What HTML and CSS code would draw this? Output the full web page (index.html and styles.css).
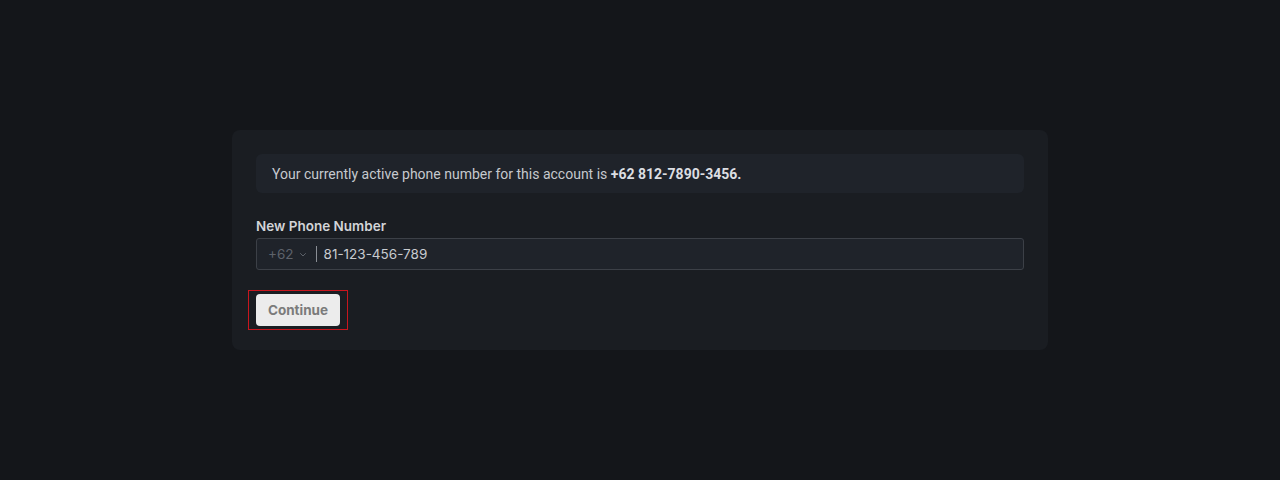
FILE: index.html
```html
<!DOCTYPE html>
<html>
<head>
<meta charset="utf-8">
<link rel="stylesheet" href="styles.css">
</head>
<body>
<main class="page">
  <section class="card">
    <div class="notice">Your currently active phone number for this account is <strong>+62 812-7890-3456.</strong></div>
    <div class="field">
      <label class="label" for="phone">New Phone Number</label>
      <div class="input">
        <span class="code">+62
          <svg class="chev" width="8" height="6" viewBox="0 0 8 6"><path d="M1.5 1.5 L4 4 L6.5 1.5" fill="none" stroke="currentColor" stroke-width="1" stroke-linecap="round" stroke-linejoin="round"/></svg>
        </span>
        <span class="sep"></span>
        <span class="value" id="phone">81-123-456-789</span>
      </div>
    </div>
    <div class="actions">
      <button class="btn">Continue</button>
    </div>
  </section>
</main>
</body>
</html>
```

FILE: styles.css
```css
* { box-sizing: border-box; }
html, body { margin: 0; padding: 0; }
body {
  background: #14161a;
  font-family: Roboto, "Liberation Sans", sans-serif;
  color: #c9ccd1;
}
.page {
  height: 480px;
  display: flex;
  align-items: center;
  justify-content: center;
}
.card {
  width: 816px;
  background: #1a1d22;
  border-radius: 8px;
  padding: 24px;
}
.notice {
  background: #1f232a;
  border-radius: 6px;
  padding: 10px 16px 9px;
  font-size: 14px;
  line-height: 20px;
  color: #c6c9ce;
}
.notice strong { color: #dcdee2; font-weight: 700; }
.field { margin-top: 23px; }
.label {
  display: block;
  font-family: Inter, "Liberation Sans", sans-serif;
  font-size: 13.5px;
  line-height: 20px;
  font-weight: 600;
  color: #d2d4d8;
  margin-bottom: 2px;
}
.input {
  height: 32px;
  border: 1px solid #3c4047;
  border-radius: 3px;
  background: #1f232a;
  display: flex;
  align-items: center;
  padding: 0 11px;
  font-family: Inter, "Liberation Sans", sans-serif;
  font-size: 13.5px;
}
.code {
  color: #5d626a;
  display: flex;
  align-items: center;
  gap: 5px;
}
.chev { color: #5d626a; margin-top: 1px; }
.sep {
  width: 1px;
  height: 16px;
  background: #8a8e95;
  margin: 0 7px 0 9px;
}
.value { color: #c8cbd0; }
.actions { margin-top: 24px; display: flex; }
.btn {
  position: relative;
  display: block;
  width: 84px;
  height: 32px;
  border: 0;
  border-radius: 4px;
  background: #ececec;
  color: #7b7b7b;
  font-family: Inter, "Liberation Sans", sans-serif;
  font-size: 13.5px;
  font-weight: 700;
  padding: 0;
}
.btn::after {
  content: "";
  position: absolute;
  left: -8px;
  right: -8px;
  top: -4px;
  bottom: -4px;
  border: 1px solid #c8161e;
  pointer-events: none;
}
```
